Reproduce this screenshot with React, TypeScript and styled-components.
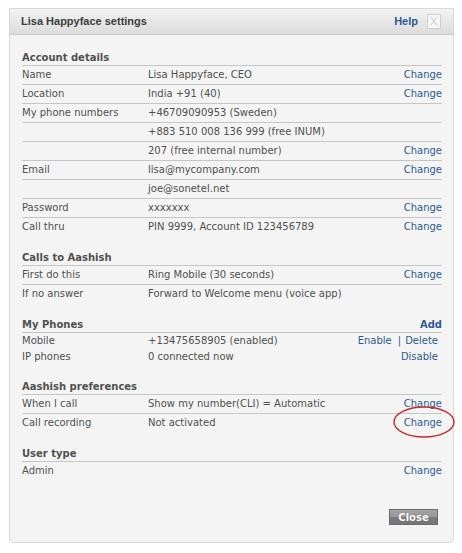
import React from "react";
import styled, { createGlobalStyle } from "styled-components";

const Global = createGlobalStyle`
  html, body { margin: 0; padding: 0; background: #ffffff; }
  body { font-family: "DejaVu Sans", Verdana, sans-serif; }
`;

const Page = styled.div`
  padding: 8px 0 0 9px;
`;

const Dialog = styled.div`
  position: relative;
  width: 445px;
  height: 535px;
  box-sizing: border-box;
  border: 1px solid #d9d9d9;
  border-radius: 0 0 5px 5px;
  background: #f4f4f4;
  display: flex;
  flex-direction: column;
`;

const TitleBar = styled.div`
  height: 26px;
  box-sizing: border-box;
  border-bottom: 1px solid #c9c9c9;
  background: linear-gradient(#f3f3f3, #dcdcdc);
  display: flex;
  align-items: center;
  padding: 0 12px 1px 11px;
  font-family: "Liberation Sans", Arial, sans-serif;
  font-size: 11px;
  font-weight: bold;
`;

const Title = styled.div`
  flex: 1;
  color: #3c3c3c;
`;

const HelpLink = styled.a`
  color: #2b5a95;
  text-decoration: none;
  margin-right: 9px;
`;

const CloseBox = styled.div`
  width: 12px;
  height: 13px;
  border: 1px solid #cfcfcf;
  background: #f7f7f7;
  display: flex;
  align-items: center;
  justify-content: center;
`;

const Body = styled.div`
  flex: 1;
  padding: 16px 11px 0 12px;
  display: flex;
  flex-direction: column;
`;

const Section = styled.div`
  & + & {
    margin-top: 15px;
  }
`;

const Header = styled.div`
  display: flex;
  justify-content: space-between;
  align-items: flex-end;
  height: 14px;
  line-height: 14px;
  border-bottom: 1px solid #c6c6c6;
  font-size: 10px;
  font-weight: bold;
  color: #505050;
`;

const Row = styled.div<{ $line?: boolean; $h?: number }>`
  display: grid;
  grid-template-columns: 126px 1fr auto;
  align-items: center;
  height: ${(p) => (p.$h ?? 18) - 1}px;
  padding-bottom: 1px;
  line-height: 14px;
  border-bottom: ${(p) => (p.$line ? "1px solid #c6c6c6" : "none")};
  font-size: 10px;
  color: #505050;
  white-space: nowrap;
`;

const Link = styled.a<{ $bold?: boolean; $inset?: boolean }>`
  color: #2b5a95;
  text-decoration: none;
  font-weight: ${(p) => (p.$bold ? "bold" : "normal")};
  text-align: right;
  padding-right: ${(p) => (p.$inset ? 4 : 0)}px;
`;

const Actions = styled.div`
  display: flex;
  gap: 6px;
  padding-right: 4px;
`;

const Bar = styled.span`
  margin-right: 4px;
`;

const Footer = styled.div`
  display: flex;
  justify-content: flex-end;
  padding: 0 15px 0 0;
  margin-bottom: 17px;
`;

const CloseButton = styled.button`
  width: 49px;
  height: 16px;
  padding: 0;
  border: 1px solid #6c6c6c;
  background: linear-gradient(#a3a3a3 0%, #999999 50%, #7c7c7c 51%, #767676 100%);
  color: #ffffff;
  font-family: "DejaVu Sans", Verdana, sans-serif;
  font-size: 10px;
  font-weight: bold;
  text-shadow: 0 0 1px #555;
`;

const Marker = styled.svg`
  position: absolute;
  left: 383px;
  top: 397px;
  overflow: visible;
`;

type R = { label: string; value: string; action?: React.ReactNode; line?: boolean; h?: number };

const Rows = ({ rows }: { rows: R[] }) => (
  <>
    {rows.map((r, i) => (
      <Row key={i} $line={r.line} $h={r.h}>
        <span>{r.label}</span>
        <span>{r.value}</span>
        {typeof r.action === "string" ? <Link href="#">{r.action}</Link> : r.action ?? <span />}
      </Row>
    ))}
  </>
);

export default function App() {
  return (
    <Page>
      <Global />
      <Dialog>
        <TitleBar>
          <Title>Lisa Happyface settings</Title>
          <HelpLink href="#">Help</HelpLink>
          <CloseBox>
            <svg width="8" height="10" viewBox="0 0 8 10">
              <path d="M0.5 0.5 L7.5 9.5 M7.5 0.5 L0.5 9.5" stroke="#c4c4c4" strokeWidth="0.9" fill="none" />
            </svg>
          </CloseBox>
        </TitleBar>
        <Body>
          <Section>
            <Header>Account details</Header>
            <Rows
              rows={[
                { label: "Name", value: "Lisa Happyface, CEO", action: "Change", line: true },
                { label: "Location", value: "India +91 (40)", action: "Change", line: true },
                { label: "My phone numbers", value: "+46709090953 (Sweden)", line: true },
                { label: "", value: "+883 510 008 136 999 (free INUM)", line: true },
                { label: "", value: "207 (free internal number)", action: "Change", line: true },
                { label: "Email", value: "lisa@mycompany.com", action: "Change", line: true },
                { label: "", value: "joe@sonetel.net", line: true },
                { label: "Password", value: "xxxxxxx", action: "Change", line: true },
                { label: "Call thru", value: "PIN 9999, Account ID 123456789", action: "Change" },
              ]}
            />
          </Section>
          <Section>
            <Header>Calls to Aashish</Header>
            <Rows
              rows={[
                { label: "First do this", value: "Ring Mobile (30 seconds)", action: "Change", line: true },
                { label: "If no answer", value: "Forward to Welcome menu (voice app)" },
              ]}
            />
          </Section>
          <Section>
            <Header>
              <span>My Phones</span>
              <Link href="#" $bold>Add</Link>
            </Header>
            <Rows
              rows={[
                {
                  label: "Mobile",
                  value: "+13475658905 (enabled)",
                  h: 16,
                  action: (
                    <Actions>
                      <Link href="#">Enable</Link>
                      <Link href="#">
                        <Bar>|</Bar>Delete
                      </Link>
                    </Actions>
                  ),
                },
                {
                  label: "IP phones",
                  value: "0 connected now",
                  h: 16,
                  action: (
                    <Link href="#" $inset>
                      Disable
                    </Link>
                  ),
                },
              ]}
            />
          </Section>
          <Section>
            <Header>Aashish preferences</Header>
            <Rows
              rows={[
                { label: "When I call", value: "Show my number(CLI) = Automatic", action: "Change", line: true },
                { label: "Call recording", value: "Not activated", action: "Change" },
              ]}
            />
          </Section>
          <Section>
            <Header>User type</Header>
            <Rows rows={[{ label: "Admin", value: "", action: "Change" }]} />
          </Section>
        </Body>
        <Footer>
          <CloseButton>Close</CloseButton>
        </Footer>
        <Marker width="62" height="32" viewBox="0 0 62 32">
          <ellipse cx="31" cy="16" rx="30" ry="15" fill="none" stroke="#c62a2f" strokeWidth="1.4" />
        </Marker>
      </Dialog>
    </Page>
  );
}
